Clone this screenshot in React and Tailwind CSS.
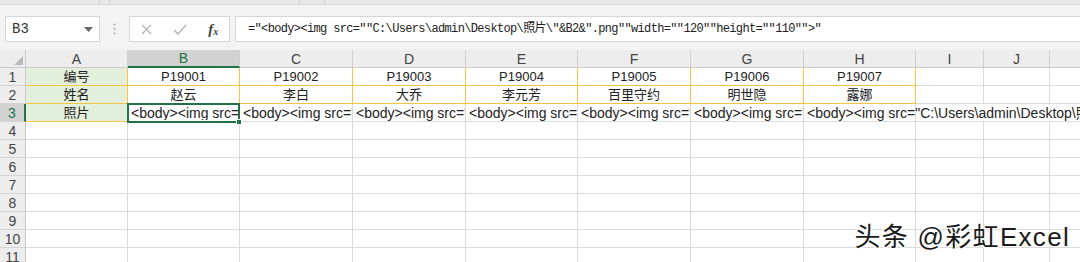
import React from 'react';

const cols = [
  { key: 'A', w: 'w-[102px]' },
  { key: 'B', w: 'w-[112px]' },
  { key: 'C', w: 'w-[113px]' },
  { key: 'D', w: 'w-[113px]' },
  { key: 'E', w: 'w-[112px]' },
  { key: 'F', w: 'w-[113px]' },
  { key: 'G', w: 'w-[113px]' },
  { key: 'H', w: 'w-[112px]' },
  { key: 'I', w: 'w-[68px]' },
  { key: 'J', w: 'w-[66px]' },
  { key: '', w: 'w-[40px]' },
];

const ids = ['P19001', 'P19002', 'P19003', 'P19004', 'P19005', 'P19006', 'P19007'];
const names = ['赵云', '李白', '大乔', '李元芳', '百里守约', '明世隐', '露娜'];
const body = (id) => `<body><img src="C:\\Users\\admin\\Desktop\\照片\\${id}.png"width="120"height="110">`;

const formula = '="<body><img src=""C:\\Users\\admin\\Desktop\\照片\\"&B2&".png""width=""120""height=""110"">"';

const cellFont = "font-['Liberation_Sans','Noto_Sans_CJK_SC',sans-serif]";

function RowHead({ n, active }) {
  return (
    <div
      className={`w-[26px] h-[18px] shrink-0 flex items-center justify-center text-[14px] leading-none border-b border-[#d4d4d4] ${cellFont} ${
        active ? 'bg-[#d2d2d2] text-[#217346] border-r-2 border-r-[#217346]' : 'bg-[#ededed] text-[#444] border-r border-r-[#c8c8c8]'
      }`}
    >
      {n}
    </div>
  );
}

function DataRow({ n, cells }) {
  return (
    <div className="flex h-[18px]">
      <RowHead n={n} active={n === 3} />
      {cols.map((c, i) => {
        const v = cells[i] || '';
        const yellow = n <= 2 && i <= 7;
        const isA = i === 0 && n <= 3;
        let cls = `${c.w} h-[18px] shrink-0 flex items-center leading-none text-[#222] whitespace-nowrap ${cellFont}`;
        if (n === 3 && i >= 1) {
          cls += ' justify-start pl-[3px] text-[14px]';
        } else {
          cls += ' justify-center text-[13px]';
        }
        if (isA) cls += ' bg-[#e2efda]';
        else cls += ' bg-white';
        if (yellow) cls += ' border-r border-b border-[#f7c342]';
        else if (n === 3 && i === 0) cls += ' border-r border-r-[#d4d4d4] border-b border-b-[#f7c342]';
        else if (n === 3 && (i === 8 || i === 9)) cls += ' border-b border-[#dadada]';
        else cls += ' border-r border-b border-[#dadada]';
        if (n === 3 && i === 7) cls += ' overflow-visible relative z-10';
        else if (n === 3 && i === 1) cls += ' relative';
        else cls += ' overflow-hidden';
        return (
          <div key={i} className={cls}>
            {n === 3 && i === 1 ? (
              <span className="block w-full overflow-hidden">{v}</span>
            ) : (
              v
            )}
            {n === 3 && i === 1 && (
              <div className="absolute -left-[1px] -top-[1px] w-[113px] h-[20px] border-2 border-[#217346] z-20">
                <div className="absolute -right-[4px] -bottom-[4px] w-[6px] h-[6px] bg-[#217346] border border-white" />
              </div>
            )}
          </div>
        );
      })}
    </div>
  );
}

export default function App() {
  const rows = [
    ['编号', ...ids],
    ['姓名', ...names],
    ['照片', ...ids.map(body)],
  ];
  return (
    <div className="w-[1080px] h-[262px] overflow-hidden bg-white relative">
      {/* top strip */}
      <div className="h-[5px] bg-[#e9e9e9] border-b border-[#d6d6d6] flex">
        <div className="w-[100px] border-r border-[#cfcfcf]" />
        <div className="w-[10px] border-r border-[#cfcfcf]" />
        <div className="w-[190px] border-r border-[#cfcfcf]" />
        <div className="w-[25px] border-r border-[#cfcfcf]" />
      </div>

      {/* formula bar */}
      <div className="h-[45px] bg-[#f3f3f3] flex items-start pt-[11px] pl-[5px]">
        <div className="w-[95px] h-[26px] bg-white border border-[#d6d6d6] flex items-center justify-between pl-[6px] pr-[6px]">
          <span className="text-[14px] text-[#333] font-['Liberation_Mono',monospace]">B3</span>
          <svg width="9" height="5" viewBox="0 0 9 5"><path d="M0 0h9L4.5 5z" fill="#666" /></svg>
        </div>
        <div className="w-[29px] h-[26px] flex items-center justify-center">
          <svg width="3" height="12" viewBox="0 0 3 12">
            <circle cx="1.5" cy="1.5" r="1" fill="#aaa" />
            <circle cx="1.5" cy="6" r="1" fill="#aaa" />
            <circle cx="1.5" cy="10.5" r="1" fill="#aaa" />
          </svg>
        </div>
        <div className="w-[101px] h-[26px] bg-white border border-[#d6d6d6] flex items-center">
          <div className="w-[34px] flex justify-center">
            <svg width="11" height="11" viewBox="0 0 11 11"><path d="M1 1l9 9M10 1l-9 9" stroke="#b5b5b5" strokeWidth="1.3" /></svg>
          </div>
          <div className="w-[34px] flex justify-center">
            <svg width="14" height="11" viewBox="0 0 14 11"><path d="M1 6l4 4 8-9" stroke="#b5b5b5" strokeWidth="1.5" fill="none" /></svg>
          </div>
          <div className="w-[32px] flex justify-center items-end font-['Liberation_Serif',serif] italic text-[#444] leading-none">
            <span className="text-[15px] font-bold">f</span>
            <span className="text-[10px] font-bold">x</span>
          </div>
        </div>
        <div className="ml-[5px] flex-1 h-[26px] bg-white border border-[#d6d6d6] border-r-0 flex items-center pl-[12px]">
          <span className="text-[12px] tracking-[-0.65px] text-[#222] whitespace-nowrap font-['Liberation_Mono','Noto_Sans_CJK_SC',monospace]">
            {formula}
          </span>
        </div>
      </div>

      {/* column headers */}
      <div className="flex h-[18px] bg-[#ededed]">
        <div className="w-[26px] h-[18px] shrink-0 border-r border-b border-[#c8c8c8] flex items-end justify-end pr-[2px] pb-[2px]">
          <svg width="9" height="9" viewBox="0 0 9 9"><path d="M9 0v9H0z" fill="#b8b8b8" /></svg>
        </div>
        {cols.map((c, i) => (
          <div
            key={i}
            className={`${c.w} h-[18px] shrink-0 flex items-center justify-center text-[14px] leading-none ${cellFont} border-r border-[#d0d0d0] ${
              i === 1 ? 'bg-[#d2d2d2] text-[#217346] border-b-2 border-b-[#217346]' : 'text-[#444] border-b border-b-[#c8c8c8]'
            }`}
          >
            {c.key}
          </div>
        ))}
      </div>

      {rows.map((r, idx) => (
        <DataRow key={idx} n={idx + 1} cells={r} />
      ))}
      {[4, 5, 6, 7, 8, 9, 10, 11].map((n) => (
        <DataRow key={n} n={n} cells={[]} />
      ))}

      {/* watermark */}
      <div className="absolute right-[10px] bottom-[12px] text-[26px] tracking-[1.3px] leading-none text-[#1a1a1a] font-['Liberation_Sans','Noto_Sans_CJK_SC',sans-serif] [text-shadow:1px_1px_0_#fff,-1px_-1px_0_#fff,1px_-1px_0_#fff,-1px_1px_0_#fff]">
        头条 @彩虹Excel
      </div>
    </div>
  );
}
